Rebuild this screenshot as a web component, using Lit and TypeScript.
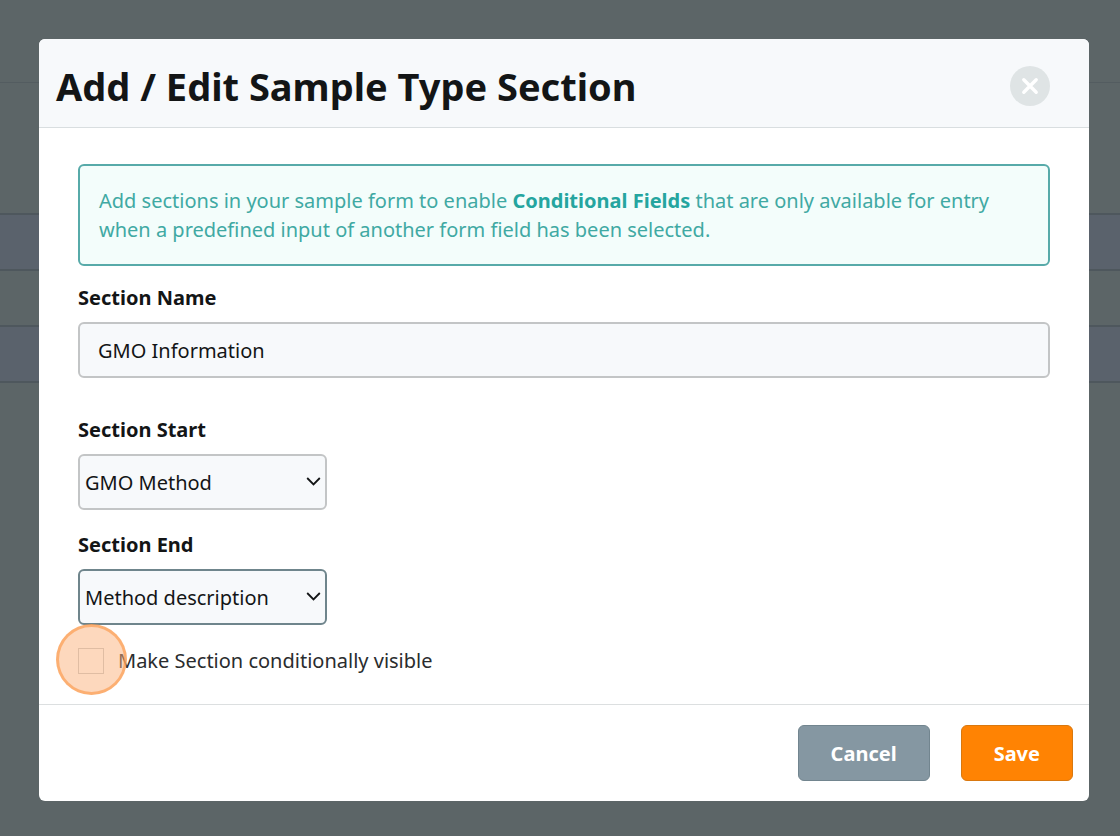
import { LitElement, html, css } from "lit";
import { customElement, property, state } from "lit/decorators.js";

@customElement("page-backdrop")
class PageBackdrop extends LitElement {
  static styles = css`
    :host {
      display: flex;
      flex-direction: column;
      background: #5c6567;
    }
    .bar {
      height: 82px;
      border-bottom: 1px solid #535c60;
    }
    .heading {
      height: 130px;
    }
    .row {
      height: 54px;
      border-top: 2px solid #4e575d;
    }
    .row.tinted {
      background: #5a626c;
    }
  `;

  render() {
    return html`
      <div class="bar"></div>
      <div class="heading"></div>
      <div class="row tinted"></div>
      <div class="row"></div>
      <div class="row tinted"></div>
      <div class="row"></div>
    `;
  }
}

@customElement("select-field")
class SelectField extends LitElement {
  @property() label = "";
  @property() value = "";
  @property({ type: Boolean }) active = false;

  static styles = css`
    :host {
      display: flex;
      flex-direction: column;
      align-items: flex-start;
      gap: 8px;
    }
    .label {
      font-size: 20px;
      line-height: 32px;
      font-weight: 700;
      color: #131516;
    }
    .control {
      display: grid;
      align-items: center;
      width: 249px;
      max-width: 100%;
    }
    .select {
      grid-area: 1 / 1;
      appearance: none;
      box-sizing: border-box;
      width: 100%;
      height: 56px;
      margin: 0;
      padding: 0 32px 0 5px;
      border: 2px solid #c3c5c6;
      border-radius: 6px;
      outline: none;
      background: #f7f9fb;
      font: inherit;
      color: #131516;
    }
    .select.active {
      border-color: #6f858c;
    }
    .chevron {
      grid-area: 1 / 1;
      justify-self: end;
      margin-right: 6px;
      pointer-events: none;
    }
  `;

  render() {
    return html`
      <label class="label" for="select">${this.label}</label>
      <div class="control">
        <select id="select" class="select ${this.active ? "active" : ""}">
          <option selected>${this.value}</option>
        </select>
        <svg class="chevron" width="15" height="10" viewBox="0 0 15 10" aria-hidden="true">
          <path d="M1.2 1 L7.5 7.4 L13.8 1" fill="none" stroke="#131516" stroke-width="1.8" />
        </svg>
      </div>
    `;
  }
}

@customElement("app-root")
class AppRoot extends LitElement {
  @state() private conditional = false;

  static styles = css`
    :host {
      display: grid;
      min-height: 100vh;
      font-family: "Noto Sans", "Open Sans", sans-serif;
      font-size: 20px;
      line-height: 29px;
      color: #131516;
    }
    .backdrop {
      grid-area: 1 / 1;
    }
    .dialog {
      grid-area: 1 / 1;
      align-self: start;
      margin: 39px 31px 36px 39px;
      border-radius: 6px;
      background: #fff;
      overflow: hidden;
    }
    .header {
      display: flex;
      align-items: center;
      justify-content: space-between;
      padding: 19px 39px 13px 17px;
      border-bottom: 1px solid #d9dee0;
      background: #f7f9fb;
    }
    .title {
      margin: 0;
      font-size: 38px;
      line-height: 56px;
      font-weight: 700;
    }
    .close {
      display: grid;
      place-items: center;
      width: 40px;
      height: 40px;
      padding: 0;
      border: 0;
      border-radius: 50%;
      background: #dfe4e5;
    }
    .body {
      display: flex;
      flex-direction: column;
      padding: 36px 39px 29px;
      border-bottom: 1px solid #dcdfe0;
    }
    .notice {
      margin: 0 0 16px;
      padding: 20px 19px;
      border: 2px solid #57aaa9;
      border-radius: 6px;
      background: #f3fdfb;
      color: #40a9a3;
    }
    .strong {
      font-weight: 700;
      color: #25a59f;
    }
    .label {
      margin-bottom: 8px;
      line-height: 32px;
      font-weight: 700;
    }
    .input {
      box-sizing: border-box;
      width: 100%;
      height: 56px;
      margin: 0 0 36px;
      padding: 0 18px;
      border: 2px solid #c3c5c6;
      border-radius: 6px;
      outline: none;
      background: #f7f9fb;
      font: inherit;
      color: inherit;
    }
    .end {
      margin-top: 19px;
    }
    .check {
      display: flex;
      align-items: center;
      gap: 14px;
      margin-top: 21px;
      color: #2a2c2e;
    }
    .tick {
      position: relative;
      display: grid;
    }
    .box {
      appearance: none;
      box-sizing: border-box;
      width: 26px;
      height: 26px;
      margin: 0;
      border: 1px solid #c4c9cb;
      background: #fff;
    }
    .box:checked {
      background: #607880;
    }
    .pulse {
      position: absolute;
      top: -24px;
      left: -22px;
      box-sizing: border-box;
      width: 71px;
      height: 71px;
      border: 3px solid rgba(252, 154, 75, 0.65);
      border-radius: 50%;
      background: rgba(252, 178, 124, 0.5);
      pointer-events: none;
    }
    .footer {
      display: flex;
      justify-content: flex-end;
      gap: 31px;
      padding: 20px 16px;
    }
    .button {
      height: 56px;
      padding: 0 32px;
      border: 1px solid #72858f;
      border-radius: 6px;
      background: #8597a2;
      font: inherit;
      font-weight: 700;
      color: #fff;
    }
    .button.primary {
      border-color: #d9780f;
      background: #ff8303;
    }
  `;

  render() {
    return html`
      <page-backdrop class="backdrop"></page-backdrop>
      <section class="dialog" role="dialog" aria-labelledby="title">
        <header class="header">
          <h1 class="title" id="title">Add / Edit Sample Type Section</h1>
          <button class="close" type="button" aria-label="Close">
            <svg width="18" height="18" viewBox="0 0 18 18" aria-hidden="true">
              <path d="M2.8 2.8 L15.2 15.2 M15.2 2.8 L2.8 15.2" stroke="#fff" stroke-width="3.4" stroke-linecap="round" />
            </svg>
          </button>
        </header>
        <div class="body">
          <p class="notice">
            Add sections in your sample form to enable <strong class="strong">Conditional Fields</strong> that are only
            available for entry when a predefined input of another form field has been selected.
          </p>
          <label class="label" for="name">Section Name</label>
          <input class="input" id="name" type="text" value="GMO Information" />
          <select-field label="Section Start" value="GMO Method"></select-field>
          <select-field class="end" label="Section End" value="Method description" active></select-field>
          <div class="check">
            <span class="tick">
              <input
                class="box"
                id="conditional"
                type="checkbox"
                .checked=${this.conditional}
                @change=${(e: Event) => (this.conditional = (e.target as HTMLInputElement).checked)}
              />
              <span class="pulse"></span>
            </span>
            <label for="conditional">Make Section conditionally visible</label>
          </div>
        </div>
        <footer class="footer">
          <button class="button" type="button">Cancel</button>
          <button class="button primary" type="button">Save</button>
        </footer>
      </section>
    `;
  }
}
